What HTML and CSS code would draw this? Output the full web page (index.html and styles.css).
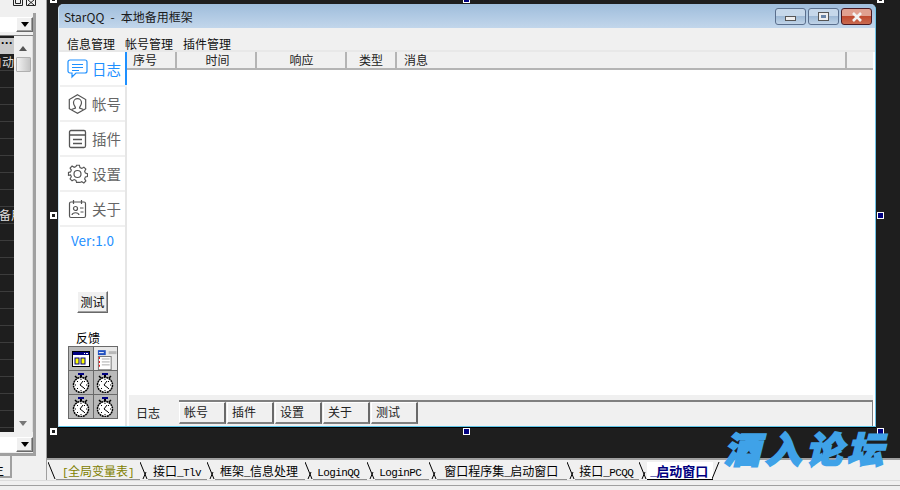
FILE: index.html
```html
<!DOCTYPE html>
<html lang="zh">
<head>
<meta charset="utf-8">
<title>StarQQ</title>
<link rel="stylesheet" href="styles.css">
</head>
<body>
<div class="ide">
  <div class="main">
    <aside class="left">
      <div class="left-top">
        <svg class="mini" width="10" height="6" viewBox="0 0 10 6"><path d="M.5 0v5.500h9V0M2.500 0v3.500h5V0" fill="none" stroke="#222"/></svg>
        <svg class="mini" width="10" height="6" viewBox="0 0 10 6"><path d="M.5 0v5.500h9V0M2 0l6 5M8 0L2 5" fill="none" stroke="#222"/></svg>
      </div>
      <div class="panel">
        <div class="combo"><span class="combo-btn"><svg width="10" height="6" viewBox="0 0 10 6"><path d="M1 0h8L5 5z" fill="#000"/></svg></span></div>
        <div class="grid-wrap">
          <div class="rows">
            <div class="rows-head">···</div>
            <div class="row cut">自动</div>
            <div class="row"></div><div class="row"></div><div class="row"></div><div class="row"></div><div class="row"></div><div class="row"></div><div class="row"></div><div class="row"></div>
            <div class="row cut2">备用</div>
            <div class="row"></div><div class="row"></div><div class="row"></div><div class="row"></div><div class="row"></div><div class="row"></div><div class="row"></div><div class="row"></div><div class="row"></div><div class="row"></div><div class="row"></div><div class="row"></div><div class="row"></div>
          </div>
          <div class="vscroll">
            <svg class="arrow" width="8" height="5" viewBox="0 0 8 5"><path d="M4 0l4 5H0z" fill="#555"/></svg>
            <div class="thumb"></div>
            <svg class="arrow down" width="8" height="5" viewBox="0 0 8 5"><path d="M0 0h8L4 5z" fill="#777"/></svg>
          </div>
        </div>
        <div class="combo second"><span class="combo-btn"><svg width="10" height="6" viewBox="0 0 10 6"><path d="M1 0h8L5 5z" fill="#000"/></svg></span></div>
      </div>
      <div class="left-tab"><span>主</span></div>
    </aside>
    <div class="right">
      <section class="designer">
        <div class="window">
          <header class="titlebar">
            <span class="title">StarQQ - 本地备用框架</span>
            <div class="winbtns">
              <span class="wbtn"><i class="min-g"></i></span>
              <span class="wbtn"><i class="max-g"></i></span>
              <span class="wbtn close"><svg width="14" height="10" viewBox="0 0 14 10"><path d="M3 1l8 8M11 1L3 9" stroke="#f2f2f2" stroke-width="2.600" fill="none"/></svg></span>
            </div>
          </header>
          <nav class="menu"><span>信息管理</span><span>帐号管理</span><span>插件管理</span></nav>
          <div class="body">
            <div class="side">
              <div class="item on">
                <svg width="21" height="20" viewBox="0 0 21 20" fill="none" stroke="#1e90ff" stroke-width="1.200"><path d="M3 1h15a2 2 0 0 1 2 2v9a2 2 0 0 1-2 2H9l-4 4v-4H3a2 2 0 0 1-2-2V3a2 2 0 0 1 2-2z"/><path d="M5 5.500h11M5 8.500h11M5 11.500h7"/></svg>
                <span>日志</span>
              </div>
              <div class="item">
                <svg width="21" height="20" viewBox="0 0 21 20" fill="none" stroke="#555" stroke-width="1.200"><path d="M10.500 .8l8.200 4.700v9.200l-8.200 4.600-8.200-4.600V5.500z"/><path d="M4.500 15.500L8.500 14c0-1.500-2-2.500-2-5.300a4 4 0 0 1 8 0c0 2.800-2 3.800-2 5.300l4 1.500"/></svg>
                <span>帐号</span>
              </div>
              <div class="item">
                <svg width="21" height="20" viewBox="0 0 21 20" fill="none" stroke="#555" stroke-width="1.300"><rect x="2.500" y="1.500" width="16" height="17" rx="1.500"/><path d="M2.500 6h16M6 10.500h9M6 14.500h9"/></svg>
                <span>插件</span>
              </div>
              <div class="item">
                <svg width="21" height="20" viewBox="0 0 21 20" fill="none" stroke="#555" stroke-width="1.200"><path d="M9 1h3l.6 2.500 1.900.8 2.200-1.300 2.100 2.100-1.300 2.200.8 1.900 2.200.6v3l-2.200.6-.8 1.900 1.300 2.200-2.100 2.100-2.200-1.300-1.900.8L12 19H9l-.6-2.100-1.900-.8-2.200 1.300-2.100-2.100 1.300-2.200-.8-1.900L.5 11.600v-3l2.200-.6.8-1.900L2.200 3.900l2.100-2.100 2.200 1.300 1.900-.8z" transform="translate(1 .3) scale(.95)"/><circle cx="10.500" cy="10" r="3.500"/></svg>
                <span>设置</span>
              </div>
              <div class="item">
                <svg width="21" height="20" viewBox="0 0 21 20" fill="none" stroke="#555" stroke-width="1.200"><rect x="2.500" y="3" width="16" height="15.500" rx="1.500"/><path d="M6.500 1v4M14.500 1v4M13 9h3.500M13.500 13h3"/><circle cx="8.500" cy="9.500" r="2"/><path d="M5 16c.5-3 6.500-3 7 0"/></svg>
                <span>关于</span>
              </div>
              <div class="ver">Ver:1.0</div>
              <button class="test" type="button">测试</button>
              <div class="fb-label">反馈</div>
              <div class="fb-grid">
                <div class="cell"><svg width="18" height="16" viewBox="0 0 18 16"><rect x=".5" y=".5" width="17" height="15" fill="#fff" stroke="#000"/><rect x="1" y="1" width="16" height="3" fill="#000080"/><path d="M12 2.500h1M14 2.500h2" stroke="#fff"/><rect x="3" y="7" width="4" height="6" fill="#ff0" stroke="#000080"/><rect x="9" y="7" width="4" height="6" fill="#ff0" stroke="#000080"/></svg></div>
                <div class="cell light"><svg width="24" height="23" viewBox="0 0 24 23"><rect x="4" y="3" width="8" height="5" fill="#2050c0"/><rect x="5" y="5" width="5" height="1" fill="#fff"/><rect x="15" y="4" width="8" height="3" fill="#b8b8b8"/><rect x="4.500" y="9.500" width="13" height="13.500" fill="#fff" stroke="#777"/><path d="M5 11h1M5 15h1M5 19h1" stroke="#e00" stroke-width="2"/><path d="M8 12h8M8 15h8M8 18h8" stroke="#aaa"/></svg></div>
                <div class="cell"><svg class="watch" width="18" height="20" viewBox="0 0 18 20"><use href="#sw"/></svg></div>
                <div class="cell"><svg class="watch" width="18" height="20" viewBox="0 0 18 20"><use href="#sw"/></svg></div>
                <div class="cell"><svg class="watch" width="18" height="20" viewBox="0 0 18 20"><use href="#sw"/></svg></div>
                <div class="cell"><svg class="watch" width="18" height="20" viewBox="0 0 18 20"><use href="#sw"/></svg></div>
              </div>
            </div>
            <div class="content">
              <div class="lv-head">
                <span class="c1">序号</span><span class="c2">时间</span><span class="c3">响应</span><span class="c4">类型</span><span class="c5">消息</span><span class="c6"></span>
              </div>
              <div class="lv-body"></div>
              <div class="tabs-gap"></div>
              <div class="tabs">
                <span class="tab active">日志</span><span class="tab">帐号</span><span class="tab">插件</span><span class="tab">设置</span><span class="tab">关于</span><span class="tab">测试</span>
              </div>
            </div>
          </div>
        </div>
        <i class="h tl"></i><i class="h tc navy"></i><i class="h tr"></i>
        <i class="h ml"></i><i class="h mr navy"></i>
        <i class="h bl"></i><i class="h bc navy"></i><i class="h br navy"></i>
        <div class="watermark">酒入论坛</div>
      </section>
      <div class="tabbar">
        <svg class="sep" width="8" height="18" viewBox="0 0 8 18"><path d="M0 0l7 17" stroke="#000" fill="none"/></svg>
        <span class="dt olive t1"><span class="lat">[</span>全局变量表<span class="lat">]</span></span>
        <svg class="sep" width="8" height="18" viewBox="0 0 8 18"><path d="M0 0l7 17M3 17l3-7" stroke="#000" fill="none"/></svg>
        <span class="dt t2">接口<span class="lat">_Tlv</span></span>
        <svg class="sep" width="8" height="18" viewBox="0 0 8 18"><path d="M0 0l7 17M3 17l3-7" stroke="#000" fill="none"/></svg>
        <span class="dt t3">框架<span class="lat">_</span>信息处理</span>
        <svg class="sep" width="8" height="18" viewBox="0 0 8 18"><path d="M0 0l7 17M3 17l3-7" stroke="#000" fill="none"/></svg>
        <span class="dt t4"><span class="lat">LoginQQ</span></span>
        <svg class="sep" width="8" height="18" viewBox="0 0 8 18"><path d="M0 0l7 17M3 17l3-7" stroke="#000" fill="none"/></svg>
        <span class="dt t4"><span class="lat">LoginPC</span></span>
        <svg class="sep" width="8" height="18" viewBox="0 0 8 18"><path d="M0 0l7 17M3 17l3-7" stroke="#000" fill="none"/></svg>
        <span class="dt t5">窗口程序集<span class="lat">_</span>启动窗口</span>
        <svg class="sep" width="8" height="18" viewBox="0 0 8 18"><path d="M0 0l7 17M3 17l3-7" stroke="#000" fill="none"/></svg>
        <span class="dt t6">接口<span class="lat">_PCQQ</span></span>
        <svg class="sep" width="8" height="18" viewBox="0 0 8 18"><path d="M0 0l7 17M3 17l3-7" stroke="#000" fill="none"/></svg>
        <span class="dt active"><span class="lat">_</span>启动窗口</span>
        <svg class="sep last" width="8" height="18" viewBox="0 0 8 18"><path d="M7 0L0 17" stroke="#000" fill="none"/></svg>
      </div>
    </div>
  </div>
  <footer class="status"></footer>
</div>
<svg class="defs" width="0" height="0">
  <symbol id="sw" viewBox="0 0 18 20">
    <rect x="6" y="0" width="6" height="2" fill="#000080"/>
    <rect x="8" y="2" width="2" height="2" fill="#000"/>
    <path d="M3 3l2 2M15 3l-2 2" stroke="#000" stroke-width="1.500"/>
    <circle cx="9" cy="12" r="7.500" fill="#fff" stroke="#000" stroke-width="1.500" stroke-dasharray="2 .6"/>
    <path d="M9 6v1M9 17v1M3 12h1M14 12h1M5 8l1 1M13 8l-1 1M5 16l1-1M13 16l-1-1" stroke="#000"/>
    <path d="M11 8l-3 4 4 3" stroke="#000" fill="none"/>
  </symbol>
</svg>
</body>
</html>
```
FILE: styles.css
```css
* { box-sizing: border-box; }
html, body { margin: 0; padding: 0; }
body { width: 900px; height: 490px; overflow: hidden; background: #f0f0f0; font-family: "Noto Sans CJK SC", "Noto Sans", sans-serif; font-size: 12px; color: #000; }
.defs { position: absolute; }
.ide { display: flex; flex-direction: column; height: 490px; }
.main { display: flex; height: 480px; }
.status { height: 10px; border-top: 1px solid #dcdcdc; background: linear-gradient(#f0f0f0 0 4px, #a0a0a0 4px 5px, #f0f0f0 5px); }

/* left property panel */
.left { width: 47px; flex: none; display: flex; flex-direction: column; border-right: 1px solid #a0a0a0; overflow: hidden; }
.left-top { height: 13px; display: flex; gap: 3px; padding-left: 13px; align-items: flex-start; }
.mini { flex: none; }
.panel { width: 36px; height: 443px; flex: none; border-right: 3px solid #a0a0a0; border-bottom: 3px solid #a0a0a0; padding-top: 4px; display: flex; flex-direction: column; }
.combo { height: 15px; background: #fff; display: flex; justify-content: flex-end; flex: none; }
.combo.second { margin-top: 5px; }
.combo-btn { width: 17px; height: 15px; background: #f0f0f0; border: 1px solid #fff; border-right-color: #696969; border-bottom-color: #696969; display: flex; align-items: center; justify-content: center; box-shadow: inset -1px -1px 0 #a0a0a0; }
.grid-wrap { display: flex; height: 397px; margin-top: 3px; flex: none; border-top: 1px solid #808080; }
.rows { width: 14px; padding-top: 2px; background: #1e1e1e; overflow: hidden; flex: none; color: #ddd; }
.rows-head { height: 16px; background: #c8c8c8; color: #000; font: bold 12px/11px "Liberation Sans", sans-serif; text-align: center; }
.row { height: 17px; border-bottom: 1px solid #3c3c3c; white-space: nowrap; font-size: 12px; line-height: 15px; }
.row.cut { text-indent: -10px; overflow: hidden; }
.row.cut2 { text-indent: -1px; overflow: hidden; }
.vscroll { flex: 1; background: #f0f0f0; border-right: 1px solid #dcdcdc; padding-top: 10px; display: flex; flex-direction: column; align-items: center; }
.thumb { width: 15px; height: 15px; margin-top: 6px; background: linear-gradient(90deg, #f2f2f2, #c4c4c4); border: 1px solid #b0b0b0; border-radius: 1px; }
.arrow.down { margin-top: auto; margin-bottom: 6px; }
.left-tab { width: 12px; height: 22px; flex: none; background: #f0f0f0; border-right: 2px solid #a0a0a0; border-bottom: 2px solid #a0a0a0; overflow: hidden; font-size: 12px; line-height: 28px; }
.left-tab span { display: block; margin-left: -8px; }

/* designer canvas */
.right { flex: 1; display: flex; flex-direction: column; min-width: 0; }
.designer { position: relative; height: 458px; background: #1e1e1e; padding: 4px 0 0 11px; }
.window { width: 818px; height: 423px; background: #f0f0f0; border: 1px solid; border-color: #a0bedc #6fc4e8 #5ec3e6 #cfe2f0; border-radius: 5px 5px 0 0; box-shadow: 0 1px 0 #000; display: flex; flex-direction: column; overflow: hidden; }
.titlebar { height: 23px; flex: none; background: linear-gradient(#a0bedc, #c2d6eb); display: flex; align-items: center; justify-content: space-between; padding: 0 3px 0 5px; }
.title { font-size: 12px; color: #1a1a1a; word-spacing: 3.500px; margin-top: -1px; }
.winbtns { display: flex; gap: 2px; }
.wbtn { width: 31px; height: 17px; border: 1px solid #5a6f8d; border-radius: 3px; background: linear-gradient(#c6d8ea 0 50%, #9fbad6 50%, #c0d4e8); display: flex; align-items: center; justify-content: center; }
.wbtn.close { background: linear-gradient(#e0a090 0 45%, #c04a30 50%, #c86a50); border-color: #4a1a22; }
.min-g { width: 11px; height: 5px; margin-top: 4px; background: #eee; border: 1px solid #555; }
.max-g { width: 11px; height: 9px; background: #eee; border: 1px solid #555; }
.max-g::after { content: ""; display: block; width: 5px; height: 3px; margin: 2px; background: #6a85a8; }
.menu { height: 24px; flex: none; display: flex; gap: 10px; padding: 7px 0 0 8px; line-height: 17px; background: #f0f0f0; border-bottom: 2px solid #e8e8e8; color: #111; }
.body { flex: 1; display: flex; min-height: 0; background: #fff; }
.side { width: 67px; flex: none; margin-left: 1px; background: #fff; border-right: 2px solid #e6e6e6; display: flex; flex-direction: column; }
.item { height: 33px; flex: none; margin-bottom: 2px; display: flex; align-items: center; gap: 4px; padding-left: 7px; font-size: 14.500px; color: #666; background: #fff; box-shadow: 0 2px 0 #f0f0f0; }
.item.on { color: #1e90ff; margin-right: -2px; box-shadow: 0 2px 0 #f0f0f0, inset -2px 0 0 #1e90ff; }
.ver { margin-top: 2px; height: 22px; text-align: center; font-size: 13.500px; line-height: 22px; color: #1e90ff; }
.test { width: 31px; height: 22px; flex: none; margin: 40px 0 0 17px; padding: 0; background: #f0f0f0; border: 1px solid; border-color: #fff #696969 #696969 #fff; box-shadow: inset -1px -1px 0 #a0a0a0; font: 12px/1 "Noto Sans CJK SC", sans-serif; color: #000; }
.fb-label { margin: 16px 0 0 16px; height: 17px; line-height: 17px; flex: none; }
.fb-grid { width: 50px; margin-left: 8px; display: grid; grid-template-columns: 1fr 1fr; background: #696969; padding: 1px; gap: 1px; }
.cell { height: 23px; background: #b9b9b9; display: flex; align-items: center; justify-content: center; overflow: hidden; }
.cell.light { background: #e8e8e8; }

/* list and tabs */
.content { flex: 1; display: flex; flex-direction: column; min-width: 0; border-right: 2px solid #fff; }
.lv-head { height: 18px; flex: none; display: flex; background: #f0f0f0; line-height: 16px; color: #222; }
.lv-head span { height: 18px; border-right: 2px solid #b4b4b4; border-bottom: 2px solid #b4b4b4; text-align: center; flex: none; }
.lv-head .c1 { width: 50px; text-align: left; padding-left: 6px; }
.lv-head .c2 { width: 80px; padding-left: 3px; }
.lv-head .c3 { width: 90px; padding-left: 1px; }
.c4 { width: 50px; }
.lv-head .c5 { width: 450px; text-align: left; padding-left: 7px; }
.lv-head .c6 { flex: 1; border-right: 0; }
.lv-body { flex: 1; background: #fff; }
.tabs-gap { height: 5px; flex: none; margin-left: 2px; background: #f0f0f0; }
.tabs { height: 26px; flex: none; margin-left: 2px; display: flex; align-items: flex-start; gap: 1px; background: linear-gradient(#808080 0 2px, #f0f0f0 2px); border-right: 1px solid #808080; }
.tab { width: 47px; height: 22px; margin-top: 2px; padding-left: 4px; line-height: 17px; border: 1px solid; border-color: #fff #696969 #808080 #fff; border-bottom-width: 2px; border-right-width: 2px; background: #f0f0f0; color: #222; }
.tab.active { width: 50px; height: 26px; margin-top: 0; margin-right: -1px; padding-left: 7px; line-height: 25px; border: 0; }

/* selection handles */
.h { position: absolute; width: 7px; height: 7px; border: 2px solid #fff; background: #1e1e1e; }
.h.navy { border-width: 1px; background: #000080; }
.tl, .ml, .bl { left: 3px; }
.tc, .bc { left: 416px; }
.tr, .mr, .br { left: 830px; }
.tl, .tc, .tr { top: -4px; }
.ml, .mr { top: 212px; }
.bl, .bc, .br { top: 428px; }
.watermark { position: absolute; left: 677px; top: 425px; font-size: 36px; line-height: 44px; font-weight: 900; font-style: italic; color: #3fa2e8; -webkit-text-stroke: 2px #3fa2e8; white-space: nowrap; letter-spacing: 5px; }

/* document tabs */
.tabbar { height: 22px; display: flex; align-items: flex-start; padding: 2px 0 0 1px; border-top: 2px solid #a0a0a0; background: #f0f0f0; overflow: hidden; }
.sep { flex: none; }
.sep.last { margin-left: -1px; }
.dt { height: 18px; white-space: nowrap; line-height: 17px; border-bottom: 1px solid #909090; font-size: 12px; color: #000; }
.lat { font-family: "Liberation Mono", monospace; font-size: 11px; letter-spacing: -.6px; }
.t1 { padding: 0 6px 0 6px; }
.t2 { padding: 0 6px 0 5px; }
.t3 { padding: 0 7px 0 5px; }
.t4 { padding: 0 8px 0 4px; }
.t5 { padding: 0 9px 0 7px; }
.t6 { padding: 0 6px 0 4px; }
.dt.olive { color: #808000; }
.dt.active { color: #000080; font-weight: 700; background: #fff; padding: 0 5px 0 3px; font-size: 13px; border-bottom-color: #000; }
```
